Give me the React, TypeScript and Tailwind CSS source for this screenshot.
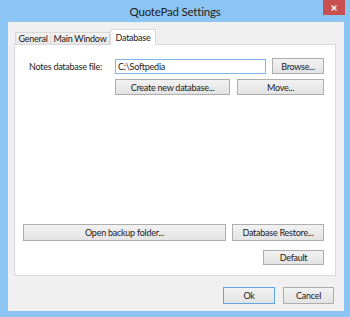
import { X } from "lucide-react";

const font = { fontFamily: 'Lato, "Noto Sans", sans-serif' };

function Btn({ label, w, h = "h-[16px]", primary = false }: { label: string; w: string; h?: string; primary?: boolean }) {
  return (
    <button
      className={`${w} ${h} flex items-center justify-center text-[9px] tracking-[-0.25px] leading-none text-[#1a1a1a] bg-gradient-to-b from-[#f2f2f2] to-[#e3e3e3] border ${
        primary ? "border-[#5ea5e8]" : "border-[#adadad]"
      }`}
    >
      {label}
    </button>
  );
}

export default function App() {
  return (
    <div className="w-[350px] h-[317px] bg-[#8cc4f3] flex flex-col text-[#1a1a1a]" style={font}>
      {/* Title bar */}
      <div className="h-[22px] grid grid-cols-[1fr_auto_1fr] items-start">
        <div />
        <div className="text-[11.5px] tracking-[-0.2px] leading-[20px] pt-[2px] text-[#222]">QuotePad Settings</div>
        <div className="flex justify-end pr-[5px]">
          <div className="w-[22px] h-[15px] bg-[#c85050] flex items-center justify-center">
            <X className="w-[8px] h-[8px] text-white" strokeWidth={4} />
          </div>
        </div>
      </div>

      {/* Client area */}
      <div className="ml-[8px] mr-[6px] h-[289px] bg-[#f0f0f0] flex flex-col pl-[6px] pr-[8px] text-[9px] tracking-[-0.25px]">
        {/* Tabs */}
        <div className="mt-[8px] h-[14px] flex items-end pl-[1px] relative z-10">
          <div className="w-[36px] h-[12px] flex items-center justify-center leading-none border border-b-0 border-[#d9d9d9] bg-gradient-to-b from-[#f3f3f3] to-[#e6e6e6]">
            General
          </div>
          <div className="w-[59px] h-[12px] flex items-center justify-center leading-none border border-b-0 border-l-0 border-[#d9d9d9] bg-gradient-to-b from-[#f3f3f3] to-[#e6e6e6]">
            Main Window
          </div>
          <div className="w-[46px] h-[16px] -mb-[1px] flex items-center justify-center leading-none border border-b-0 border-[#d9d9d9] bg-white">
            Database
          </div>
        </div>

        {/* Panel */}
        <div className="w-[322px] h-[232px] bg-white border border-[#d9d9d9] flex flex-col pt-[13px] pb-[10px] pr-[11px]">
          <div className="flex items-center h-[16px] pl-[14px]">
            <div className="w-[86px] leading-none">Notes database file:</div>
            <div className="w-[151px] h-[15px] border border-[#7eb4ea] bg-white flex items-center pl-[2px] leading-none">
              C:\Softpedia
            </div>
            <div className="ml-[6px]">
              <Btn label="Browse..." w="w-[52px]" />
            </div>
          </div>
          <div className="flex mt-[5px] pl-[100px] gap-[7px]">
            <Btn label="Create new database..." w="w-[115px]" />
            <Btn label="Move..." w="w-[87px]" />
          </div>

          <div className="flex-1" />

          <div className="flex pl-[8px] gap-[6px]">
            <Btn label="Open backup folder..." w="w-[203px]" h="h-[17px]" />
            <Btn label="Database Restore..." w="w-[92px]" h="h-[17px]" />
          </div>
          <div className="flex justify-end mt-[9px]">
            <Btn label="Default" w="w-[61px]" h="h-[15px]" />
          </div>
        </div>

        {/* Dialog buttons */}
        <div className="flex justify-end gap-[8px] mt-[11px] pr-[2px]">
          <Btn label="Ok" w="w-[52px]" h="h-[17px]" primary />
          <Btn label="Cancel" w="w-[51px]" h="h-[17px]" />
        </div>
      </div>
    </div>
  );
}
